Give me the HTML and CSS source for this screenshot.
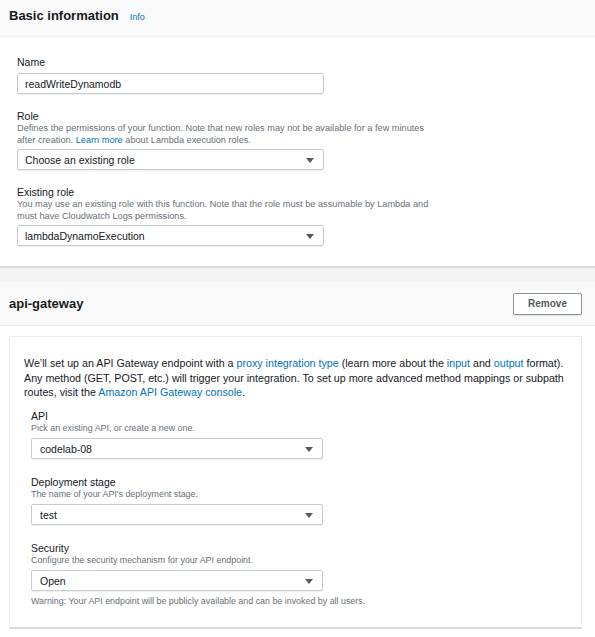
FILE: index.html
```html
<!DOCTYPE html>
<html>
<head>
<meta charset="utf-8">
<link rel="stylesheet" href="styles.css">
</head>
<body>
<section class="card card-basic">
  <div class="card-head">
    <h2 class="title">Basic information</h2>
    <a class="info">Info</a>
  </div>
  <div class="card-body">
    <div class="field">
      <div class="label">Name</div>
      <div class="control input">readWriteDynamodb</div>
    </div>
    <div class="field">
      <div class="label">Role</div>
      <div class="desc">Defines the permissions of your function. Note that new roles may not be available for a few minutes<br>after creation. <a class="link">Learn more</a> about Lambda execution roles.</div>
      <div class="control select"><span>Choose an existing role</span><i class="caret"></i></div>
    </div>
    <div class="field">
      <div class="label">Existing role</div>
      <div class="desc">You may use an existing role with this function. Note that the role must be assumable by Lambda and<br>must have Cloudwatch Logs permissions.</div>
      <div class="control select"><span>lambdaDynamoExecution</span><i class="caret"></i></div>
    </div>
  </div>
</section>

<section class="card card-api">
  <div class="card-head head-api">
    <h2 class="title">api-gateway</h2>
    <button class="btn">Remove</button>
  </div>
  <div class="api-body">
    <div class="box">
      <p class="intro"><span class="line">We’ll set up an API Gateway endpoint with a <a class="link">proxy integration type</a> (learn more about the <a class="link">input</a> and <a class="link">output</a> format).</span><span class="line">Any method (GET, POST, etc.) will trigger your integration. To set up more advanced method mappings or subpath</span><span class="line">routes, visit the <a class="link">Amazon API Gateway console</a>.</span></p>
      <div class="fields">
        <div class="field field-api">
          <div class="label">API</div>
          <div class="hint">Pick an existing API, or create a new one.</div>
          <div class="control select"><span>codelab-08</span><i class="caret"></i></div>
        </div>
        <div class="field field-api">
          <div class="label">Deployment stage</div>
          <div class="hint">The name of your API's deployment stage.</div>
          <div class="control select"><span>test</span><i class="caret"></i></div>
        </div>
        <div class="field field-api">
          <div class="label">Security</div>
          <div class="hint">Configure the security mechanism for your API endpoint.</div>
          <div class="control select"><span>Open</span><i class="caret"></i></div>
          <div class="warning">Warning: Your API endpoint will be publicly available and can be invoked by all users.</div>
        </div>
      </div>
    </div>
  </div>
</section>
</body>
</html>
```

FILE: styles.css
```css
* { box-sizing: border-box; }
html, body { margin: 0; padding: 0; }
body {
  background: #f2f3f3;
  font-family: "Liberation Sans", Arial, sans-serif;
  color: #16191f;
  width: 595px;
  height: 637px;
  overflow: hidden;
}
.card { background: #fff; }
.card-basic {
  border-bottom: 2px solid #d5dbdb;
  margin-bottom: 14px;
}
.card-head {
  background: #fafafa;
  border-bottom: 1px solid #eaeded;
  display: flex;
  align-items: baseline;
  height: 37px;
  padding: 8px 9px 0;
}
.title {
  margin: 0;
  font-size: 13px;
  line-height: 16px;
  font-weight: bold;
  color: #16191f;
}
.info {
  margin-left: 11px;
  font-size: 9px;
  color: #0073bb;
}
.card-body {
  padding: 18px 17px 20px;
}
.field + .field { margin-top: 15px; }
.label {
  font-size: 10.5px;
  line-height: 14px;
  color: #16191f;
}
.desc {
  font-size: 9.2px;
  line-height: 11.5px;
  color: #687078;
}
.hint {
  font-size: 8.9px;
  line-height: 11.5px;
  color: #687078;
}
.link { color: #0073bb; }
.control {
  margin-top: 3px;
  height: 21px;
  width: 307px;
  border: 1px solid #c6cccd;
  border-radius: 2px;
  background: #fff;
  font-size: 10.5px;
  color: #16191f;
  display: flex;
  align-items: center;
  padding: 0 9px 0 7px;
  box-shadow: 0 1px 1px rgba(0,0,0,0.06);
}
.input { margin-top: 4px; }
.select { justify-content: space-between; }
.caret {
  width: 0;
  height: 0;
  border-left: 4px solid transparent;
  border-right: 4px solid transparent;
  border-top: 5px solid #545b64;
  margin-top: 1px;
}
.head-api {
  height: 44px;
  align-items: center;
  justify-content: space-between;
  padding: 0 13px 0 9px;
}
.btn {
  width: 69px;
  height: 22px;
  border: 1px solid #879596;
  border-radius: 2px;
  background: #fff;
  font-family: "Liberation Sans", Arial, sans-serif;
  font-weight: bold;
  font-size: 10px;
  color: #545b64;
  padding: 0;
  box-shadow: 0 1px 1px rgba(0,0,0,0.1);
}
.api-body {
  padding: 10px 13px 10px 9px;
  background: #fff;
}
.box {
  border: 1px solid #eaeded;
  border-bottom: 2px solid #d5dbdb;
  padding: 19px 4px 19px 14px;
}
.intro {
  margin: 0;
  font-size: 10.7px;
  line-height: 14.5px;
  color: #16191f;
}
.line {
  display: block;
  white-space: nowrap;
}
.fields {
  margin-top: 9.5px;
  padding-left: 7px;
}
.field-api + .field-api { margin-top: 16px; }
.field-api .control { width: 292px; padding-left: 8px; margin-top: 3.5px; }
.warning {
  margin-top: 5px;
  font-size: 8.9px;
  line-height: 11.5px;
  color: #687078;
}
```
